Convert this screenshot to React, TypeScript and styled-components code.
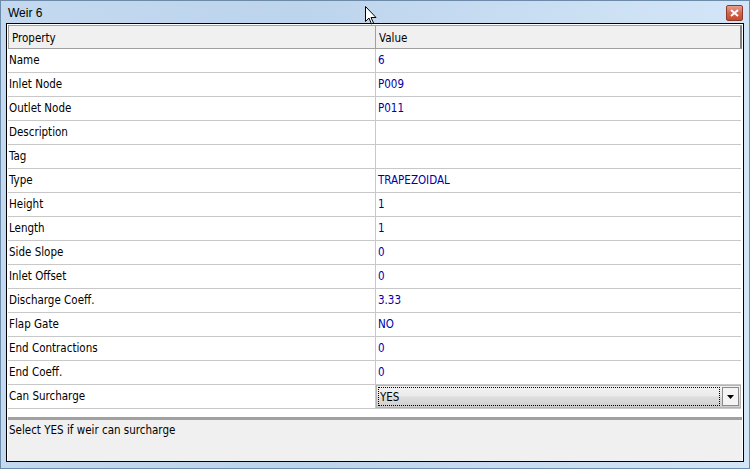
import { Fragment } from "react";
import styled, { createGlobalStyle } from "styled-components";

const GlobalStyle = createGlobalStyle`
  html, body {
    margin: 0;
    padding: 0;
    background: #ffffff;
  }
  body {
    font-family: "DejaVu Sans Condensed", "Liberation Sans", Arial, sans-serif;
  }
`;

type Prop = { name: string; value: string };

const props: Prop[] = [
  { name: "Name", value: "6" },
  { name: "Inlet Node", value: "P009" },
  { name: "Outlet Node", value: "P011" },
  { name: "Description", value: "" },
  { name: "Tag", value: "" },
  { name: "Type", value: "TRAPEZOIDAL" },
  { name: "Height", value: "1" },
  { name: "Length", value: "1" },
  { name: "Side Slope", value: "0" },
  { name: "Inlet Offset", value: "0" },
  { name: "Discharge Coeff.", value: "3.33" },
  { name: "Flap Gate", value: "NO" },
  { name: "End Contractions", value: "0" },
  { name: "End Coeff.", value: "0" },
];

const uiFont = `"DejaVu Sans Condensed", "Liberation Sans", Arial, sans-serif`;

const Window = styled.div`
  position: relative;
  width: 750px;
  height: 469px;
  box-sizing: border-box;
  display: flex;
  flex-direction: column;
  background: linear-gradient(90deg, #c3d9f0 0%, #bcd4ec 40%, #c9ddf2 70%, #d3e6f8 100%);
  border: 1px solid #6d8aa8;
  overflow: hidden;
`;

const TitleBar = styled.div`
  flex-shrink: 0;
  height: 22px;
  display: flex;
  align-items: center;
  justify-content: space-between;
  padding: 1px 6px 0 7px;
  box-sizing: border-box;
  font-family: "Liberation Sans", Arial, sans-serif;
  font-size: 12px;
  color: #000000;
`;

const CloseButton = styled.div`
  width: 15px;
  height: 14px;
  border: 1px solid #8c3a2c;
  border-radius: 2px;
  background: linear-gradient(180deg, #e8a08e 0%, #d6644c 50%, #c24a31 100%);
  display: flex;
  align-items: center;
  justify-content: center;
`;

const Client = styled.div`
  flex: 1;
  min-height: 0;
  margin: 0 5px 6px 5px;
  border: 1px solid #000000;
  background: #ffffff;
  display: flex;
  flex-direction: column;
  padding: 1px 1px 0 1px;
`;

const Grid = styled.div`
  display: grid;
  grid-template-columns: 367px 1fr;
  font-family: ${uiFont};
  font-size: 11.5px;
`;

const HeaderCell = styled.div<{ $last?: boolean }>`
  height: 22px;
  box-sizing: border-box;
  display: flex;
  align-items: center;
  padding: 2px 0 0 3px;
  background: #f0f0f0;
  border-top: 1px solid #a0a0a0;
  border-bottom: 1px solid #a0a0a0;
  border-left: 1px solid #a0a0a0;
  border-right: ${(p) => (p.$last ? "2px solid #808080" : "none")};
  color: #000000;
  height: 24px;
`;

const Cell = styled.div<{ $value?: boolean }>`
  height: 24px;
  box-sizing: border-box;
  display: flex;
  align-items: center;
  padding: 0 0 2px ${(p) => (p.$value ? "2px" : "1px")};
  border-bottom: 1px solid #c8c8c8;
  border-left: ${(p) => (p.$value ? "1px solid #c8c8c8" : "none")};
  color: ${(p) => (p.$value ? "#0000a8" : "#000000")};
  margin-right: ${(p) => (p.$value ? "1px" : "0")};
`;

const ComboCell = styled.div`
  height: 24px;
  box-sizing: border-box;
  border-bottom: 1px solid #c8c8c8;
  border-left: 1px solid #c8c8c8;
  margin-right: 1px;
  display: flex;
`;

const Combo = styled.div`
  flex: 1;
  display: flex;
  align-items: stretch;
  border: 1px solid #b4b4b4;
  background: linear-gradient(180deg, #f2f2f2 0%, #ebebeb 45%, #dddddd 55%, #cfcfcf 100%);
  padding: 1px;
  gap: 2px;
`;

const ComboText = styled.div`
  flex: 1;
  display: flex;
  align-items: center;
  border: 1px dotted #000000;
  padding-left: 1px;
  color: #000000;
`;

const ComboButton = styled.div`
  width: 15px;
  border: 1px solid #8a8a8a;
  background: #f4f4f4;
  display: flex;
  align-items: center;
  justify-content: center;
`;

const Spacer = styled.div`
  flex: 1;
`;

const Splitter = styled.div`
  flex-shrink: 0;
  height: 3px;
  background: #a0a0a0;
`;

const HelpPanel = styled.div`
  flex-shrink: 0;
  box-sizing: border-box;
  height: 41px;
  background: #f0f0f0;
  padding: 3px 1px 0 1px;
  font-family: ${uiFont};
  font-size: 11.5px;
  color: #000000;
`;

const Cursor = styled.svg`
  position: absolute;
  left: 364px;
  top: 5px;
`;

export default function App() {
  return (
    <>
      <GlobalStyle />
      <Window>
        <TitleBar>
          <span>Weir 6</span>
          <CloseButton>
            <svg width="9" height="8" viewBox="0 0 9 8">
              <path d="M1 1 L8 7 M8 1 L1 7" stroke="#ffffff" strokeWidth="2" />
            </svg>
          </CloseButton>
        </TitleBar>
        <Client>
          <Grid>
            <HeaderCell>Property</HeaderCell>
            <HeaderCell $last>Value</HeaderCell>
            {props.map((p) => (
              <Fragment key={p.name}>
                <Cell>{p.name}</Cell>
                <Cell $value>{p.value}</Cell>
              </Fragment>
            ))}
            <Cell>Can Surcharge</Cell>
            <ComboCell>
              <Combo>
                <ComboText>YES</ComboText>
                <ComboButton>
                  <svg width="7" height="4" viewBox="0 0 7 4">
                    <path d="M0 0 H7 L3.5 4 Z" fill="#000000" />
                  </svg>
                </ComboButton>
              </Combo>
            </ComboCell>
          </Grid>
          <Spacer />
          <Splitter />
          <HelpPanel>Select YES if weir can surcharge</HelpPanel>
        </Client>
        <Cursor width="12" height="19" viewBox="0 0 12 19">
          <path
            d="M0.5 0.5 L0.5 15.5 L4 12 L6.5 18 L8.5 17 L6 11.5 L11 11.5 Z"
            fill="#ffffff"
            stroke="#000000"
            strokeWidth="1"
          />
        </Cursor>
      </Window>
    </>
  );
}
